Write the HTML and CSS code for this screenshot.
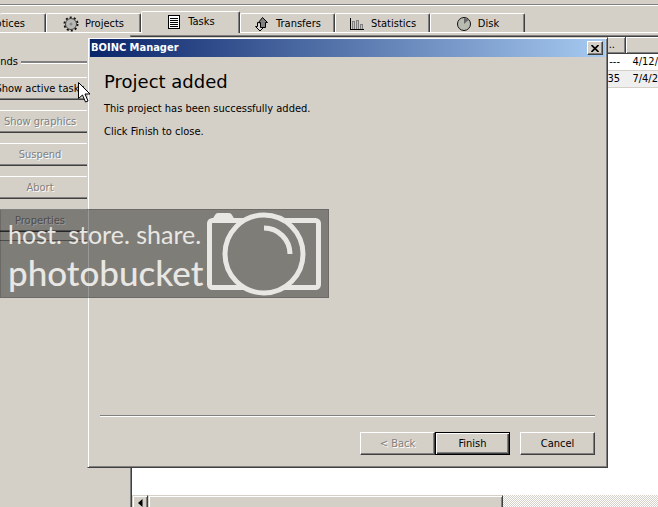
FILE: index.html
```html
<!DOCTYPE html>
<html lang="en">
<head>
<meta charset="utf-8">
<title>BOINC Manager</title>
<link rel="stylesheet" href="styles.css">
</head>
<body>
<div class="app">
  <header class="toolbar"></header>
  <nav class="tabs">
    <button class="tab tab-clipped">Notices</button>
    <button class="tab">
      <svg class="icon" width="16" height="16" viewBox="0 0 16 16"><circle cx="8" cy="8" r="6.500" fill="none" stroke="#111" stroke-width="2" stroke-dasharray="2 2.080"/><circle cx="8" cy="8" r="5.500" fill="#b8b8b4" stroke="#444" stroke-width="1"/><circle cx="8" cy="8" r="1.500" fill="#888"/></svg>
      Projects</button>
    <button class="tab tab-active">
      <svg class="icon" width="16" height="16" viewBox="0 0 16 16" shape-rendering="crispEdges"><rect x="2.500" y="1.500" width="11" height="13" fill="#fff" stroke="#000"/><path d="M4 4.500h8M4 6.500h8M4 8.500h8M4 10.500h8M4 12.500h8" stroke="#000"/></svg>
      Tasks</button>
    <button class="tab">
      <svg class="icon" width="16" height="16" viewBox="0 0 16 16"><path d="M3.500 6.500v4h-2l4.500 4.500 4-4h-2v-4z" fill="#d8d8d4" stroke="#000"/><path d="M8.500 1.500L13.500 6.500h-2v5h-5v-5h-2z" fill="#808080" stroke="#000"/></svg>
      Transfers</button>
    <button class="tab">
      <svg class="icon" width="16" height="16" viewBox="0 0 16 16" shape-rendering="crispEdges"><path d="M3.500 13V5.500h2V13M7.500 13V4.500h2V13M11.500 13V8.500h2V13" fill="#c0c0bc" stroke="#808080"/><path d="M1.500 2v11.500H15" fill="none" stroke="#000"/></svg>
      Statistics</button>
    <button class="tab">
      <svg class="icon" width="16" height="16" viewBox="0 0 16 16"><circle cx="8" cy="8" r="6.500" fill="#b8bcb0" stroke="#111"/><path d="M8 8V2a6 6 0 0 1 4.500 2z" fill="#666"/></svg>
      Disk</button>
  </nav>
  <main class="workspace">
    <aside class="sidebar">
      <div class="group">
        <div class="legend"><span class="legend-text">Commands</span></div>
        <button class="command">Show active tasks</button>
        <button class="command" disabled>Show graphics</button>
        <button class="command" disabled>Suspend</button>
        <button class="command" disabled>Abort</button>
        <button class="command" disabled>Properties</button>
      </div>
    </aside>
    <section class="list">
      <table class="tasks">
        <thead><tr><th>..</th><th class="col-deadline"></th></tr></thead>
        <tbody>
          <tr><td>---</td><td>4/12/</td></tr>
          <tr class="alt"><td>35</td><td>7/4/2</td></tr>
        </tbody>
      </table>
      <div class="scrollbar">
        <button class="scroll-arrow" aria-label="Scroll left"><svg width="5" height="8" viewBox="0 0 5 8"><path d="M4.500 0v8L0 4z"/></svg></button>
        <div class="scroll-thumb"></div>
      </div>
    </section>
  </main>
</div>

<div class="dialog" role="dialog" aria-labelledby="dialog-title">
  <div class="titlebar">
    <span id="dialog-title">BOINC Manager</span>
    <button class="close" aria-label="Close"><svg width="8" height="7" viewBox="0 0 8 7"><path d="M0.500 0L7.500 7M7.500 0L0.500 7" stroke="#000" stroke-width="1.600"/></svg></button>
  </div>
  <div class="content">
    <h1>Project added</h1>
    <p>This project has been successfully added.</p>
    <p>Click Finish to close.</p>
  </div>
  <div class="actions">
    <button class="action" disabled>&lt; Back</button>
    <button class="action action-default">Finish</button>
    <button class="action action-cancel">Cancel</button>
  </div>
</div>

<div class="watermark">
  <div class="brand">
    <span class="slogan">host. store. share.</span>
    <span class="wordmark">photobucket</span>
  </div>
  <svg class="camera" width="114" height="84" viewBox="0 0 114 84" fill="none" stroke="#e8e7e3">
    <rect x="2.500" y="8.500" width="109" height="67" rx="3" stroke-width="5"/>
    <path d="M5 8L8 3Q9 1 11 1H22Q24 1 25 3L28 8z" fill="#e8e7e3" stroke="none"/>
    <circle cx="57" cy="42" r="39" fill="#7f7d78" stroke-width="5"/>
    <path d="M57 16A26 26 0 0 1 83 42" stroke-width="5"/>
  </svg>
</div>

<svg class="cursor" width="13" height="21" viewBox="0 0 13 21"><path d="M.5.5V16.500L4.500 13 7.500 20 10 19 7 12H12z" fill="#fff" stroke="#000"/></svg>
</body>
</html>
```
FILE: styles.css
```css
:root {
  --face: #d4d0c8;
  --shade: #808080;
  --dark: #404040;
}

* { box-sizing: border-box; }

body {
  margin: 0;
  overflow: hidden;
  position: relative;
  height: 100vh;
  background: var(--face);
  color: #000;
  font: 11px/14px "DejaVu Sans Condensed", "Noto Sans", sans-serif;
}

button {
  font: inherit;
  color: inherit;
  background: var(--face);
  margin: 0;
  padding: 0;
  border: 0;
}

button:disabled {
  color: var(--shade);
  text-shadow: 1px 1px 0 #fff;
}

.app {
  display: flex;
  flex-direction: column;
  height: 100%;
}

.toolbar {
  flex: none;
  height: 6px;
  border-bottom: 1px solid #fff;
  box-shadow: inset 0 -1px var(--shade);
}

/* Tabs */
.tabs {
  flex: none;
  display: flex;
  align-items: flex-end;
  height: 27px;
  border-bottom: 1px solid #fff;
}

.tab {
  display: flex;
  align-items: center;
  justify-content: center;
  gap: 6px;
  width: 95px;
  height: 19px;
  padding-top: 1px;
  border-top: 1px solid #fff;
  border-left: 1px solid #fff;
  border-right: 1px solid var(--dark);
  border-radius: 2px 2px 0 0;
  box-shadow: inset -1px 0 var(--shade);
  white-space: nowrap;
}

.tab-clipped {
  width: 46px;
  justify-content: flex-end;
  padding-right: 20px;
  border-left: 0;
  overflow: hidden;
}

.tab-active {
  width: 99px;
  height: 22px;
  margin-bottom: -1px;
  padding-bottom: 2px;
}

.icon { flex: none; }

/* Workspace */
.workspace {
  flex: 1;
  display: flex;
  min-height: 0;
  padding-top: 2px;
}

.sidebar {
  flex: none;
  width: 130px;
  overflow: hidden;
  padding-top: 20px;
}

.group {
  display: flex;
  flex-direction: column;
  gap: 10px;
  height: 186px;
  border-bottom: 1px solid var(--shade);
}

.legend {
  display: flex;
  align-items: center;
  gap: 3px;
}

.legend::after {
  content: "";
  flex: 1;
  height: 2px;
  background: var(--shade);
  border-bottom: 1px solid #fff;
}

.legend-text {
  width: 18px;
  display: flex;
  justify-content: flex-end;
}

.command {
  flex: none;
  width: 156px;
  height: 23px;
  margin-left: -38px;
  border-top: 1px solid #fff;
  border-bottom: 1px solid var(--dark);
  box-shadow: inset 0 -1px var(--shade);
}

.legend + .command { margin-top: -2px; }

.list {
  flex: 1;
  min-width: 0;
  display: flex;
  flex-direction: column;
  justify-content: space-between;
  overflow: hidden;
  background: #fff;
  border-top: 1px solid var(--shade);
  border-left: 1px solid var(--shade);
  box-shadow: inset 1px 1px var(--dark);
  padding: 1px 0 0 1px;
}

.tasks {
  width: 100%;
  table-layout: fixed;
  border-collapse: separate;
  border-spacing: 0;
  text-align: right;
}

.tasks th {
  height: 17px;
  padding: 0 10px 0 0;
  font-weight: normal;
  background: var(--face);
  border-right: 1px solid var(--dark);
  border-bottom: 1px solid var(--dark);
  box-shadow: inset 1px 1px #fff, inset -1px -1px var(--shade);
}

.tasks th:last-child {
  border-right: 0;
  box-shadow: inset 1px 1px #fff, inset 0 -1px var(--shade);
}

.col-deadline { width: 32px; }

.tasks td {
  height: 17px;
  padding: 0 6px 0 0;
  border-bottom: 1px solid var(--face);
}

.tasks td:last-child { padding: 0; }

.alt { background: #efefef; }

.scrollbar {
  display: flex;
  height: 16px;
  margin-bottom: -4px;
  flex: none;
  background: repeating-conic-gradient(#fff 0 25%, var(--face) 0 50%) 0 0 / 2px 2px;
}

.scroll-arrow,
.scroll-thumb {
  background: var(--face);
  border: 1px solid;
  border-color: var(--face) var(--dark) var(--dark) var(--face);
  box-shadow: inset 1px 1px #fff, inset -1px -1px var(--shade);
}

.scroll-arrow {
  width: 16px;
  display: flex;
  align-items: center;
  justify-content: center;
}

.scroll-thumb { width: 355px; }

/* Wizard dialog */
.dialog {
  position: absolute;
  inset: 37px 50px 39px 87px;
  display: flex;
  flex-direction: column;
  padding: 1px;
  background: var(--face);
  border: 1px solid;
  border-color: var(--face) var(--dark) var(--dark) var(--face);
  box-shadow: inset 1px 1px #fff, inset -1px -1px var(--shade);
}

.titlebar {
  display: flex;
  align-items: center;
  justify-content: space-between;
  height: 18px;
  margin: 0 1px;
  padding: 0 2px 0 1px;
  background: linear-gradient(90deg, #0a246a, #a6caf0);
  color: #fff;
  font-weight: bold;
}

.close {
  display: flex;
  align-items: center;
  justify-content: center;
  width: 16px;
  height: 14px;
  border: 1px solid;
  border-color: #fff var(--dark) var(--dark) #fff;
  box-shadow: inset -1px -1px var(--shade);
}

.content {
  flex: 1;
  margin: 0 11px;
  padding: 13px 4px 0;
  border-bottom: 1px solid #fff;
  box-shadow: inset 0 -1px var(--shade);
}

h1 {
  margin: 0 0 8px;
  font: 18px/24px "DejaVu Sans", sans-serif;
}

p { margin: 0 0 9px; }

.actions {
  display: flex;
  justify-content: flex-end;
  padding: 15px 11px 11px;
}

.action {
  width: 75px;
  height: 23px;
  border: 1px solid;
  border-color: #fff var(--dark) var(--dark) #fff;
  box-shadow: inset -1px -1px var(--shade);
}

.action-default {
  border-color: #000;
  box-shadow: inset 1px 1px #fff, inset -1px -1px var(--dark), inset -2px -2px var(--shade);
}

.action-cancel { margin-left: 10px; }

/* Overlays */
.watermark {
  position: absolute;
  left: 0;
  top: 209px;
  display: flex;
  align-items: center;
  justify-content: space-between;
  width: 329px;
  height: 89px;
  padding: 0 7px;
  background: rgba(0, 0, 0, 0.4);
  border: 1px solid rgba(0, 0, 0, 0.15);
  color: #e8e7e3;
  font-family: Lato, sans-serif;
}

.brand {
  display: flex;
  flex-direction: column;
  white-space: nowrap;
}

.slogan { font-size: 25px; line-height: 36px; }

.wordmark { font-size: 35px; line-height: 40px; font-weight: 500; }

.camera { flex: none; }

.cursor {
  position: absolute;
  left: 78px;
  top: 82px;
}
```
